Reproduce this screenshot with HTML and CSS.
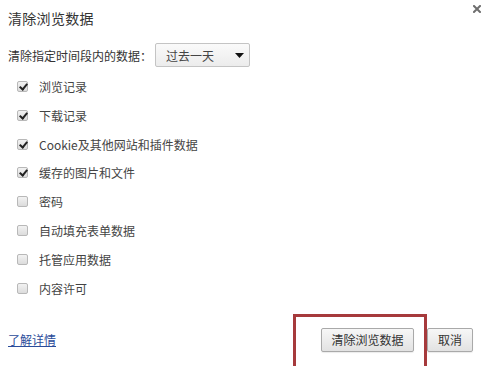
FILE: index.html
```html
<!DOCTYPE html>
<html lang="zh-CN">
<head>
<meta charset="utf-8">
<link rel="stylesheet" href="styles.css">
</head>
<body>
<div class="dialog">
  <div class="header">
    <div class="title">清除浏览数据</div>
    <span class="close" aria-label="关闭">
      <svg width="8" height="8" viewBox="0 0 8 8"><path d="M1 1L7 7M7 1L1 7" stroke="#6f6f6f" stroke-width="2" stroke-linecap="square"/></svg>
    </span>
  </div>
  <div class="period">
    <span class="period-label">清除指定时间段内的数据：</span>
    <div class="select">
      <span>过去一天</span>
      <svg class="arrow" width="9" height="5" viewBox="0 0 9 5"><path d="M0 0H9L4.5 5Z" fill="#111"/></svg>
    </div>
  </div>
  <ul class="options">
    <li><span class="cb checked"></span>浏览记录</li>
    <li><span class="cb checked"></span>下载记录</li>
    <li><span class="cb checked"></span>Cookie及其他网站和插件数据</li>
    <li><span class="cb checked"></span>缓存的图片和文件</li>
    <li><span class="cb"></span>密码</li>
    <li><span class="cb"></span>自动填充表单数据</li>
    <li><span class="cb"></span>托管应用数据</li>
    <li><span class="cb"></span>内容许可</li>
  </ul>
  <div class="footer">
    <a class="learn" href="#">了解详情</a>
    <div class="actions">
      <button class="btn btn-clear">清除浏览数据</button>
      <button class="btn btn-cancel">取消</button>
    </div>
  </div>
  <div class="highlight"></div>
</div>
</body>
</html>
```
FILE: styles.css
```css
html, body {
  margin: 0;
  padding: 0;
  background: #fff;
}
body {
  font-family: "Microsoft YaHei", "Noto Sans CJK SC", "Noto Sans", sans-serif;
  color: #333;
  font-size: 12px;
}
.dialog {
  position: relative;
  width: 486px;
  height: 366px;
  overflow: hidden;
  padding: 0 8px;
  box-sizing: border-box;
}
.header {
  display: flex;
  justify-content: space-between;
  align-items: flex-start;
  height: 36px;
}
.title {
  font-size: 14px;
  line-height: 20px;
  margin-top: 8px;
  letter-spacing: 0.3px;
  color: #333;
}
.close {
  display: flex;
  margin-top: 5px;
  margin-right: -3px;
}
.period {
  display: flex;
  align-items: center;
  height: 24px;
  margin-top: 7px;
}
.period-label {
  width: 147px;
  white-space: nowrap;
}
.select {
  width: 95px;
  height: 24px;
  box-sizing: border-box;
  border: 1px solid #c4c4c4;
  border-radius: 2px;
  background: linear-gradient(#fafafa, #ececec);
  display: flex;
  align-items: center;
  justify-content: space-between;
  padding: 0 5px 0 10px;
  color: #444;
}
.arrow {
  display: block;
}
.options {
  list-style: none;
  margin: 5px 0 0;
  padding: 0;
}
.options li {
  display: flex;
  align-items: center;
  height: 28.85px;
  padding-left: 9px;
  white-space: nowrap;
  color: #444;
}
.cb {
  width: 11px;
  height: 11px;
  box-sizing: border-box;
  border: 1px solid #b8b8b8;
  border-radius: 2px;
  background: linear-gradient(#f2f2f2, #dcdcdc);
  margin-right: 11px;
  position: relative;
  flex-shrink: 0;
}
.cb.checked::after {
  content: "";
  position: absolute;
  left: 3px;
  top: 0px;
  width: 3px;
  height: 6px;
  border: solid #222;
  border-width: 0 2px 2px 0;
  transform: rotate(40deg);
}
.footer {
  display: flex;
  justify-content: space-between;
  align-items: center;
  margin-top: 25px;
  height: 24px;
}
.learn {
  color: #2b4c9a;
  text-decoration: underline;
}
.actions {
  display: flex;
  gap: 13px;
  margin-right: 5px;
}
.btn {
  font-family: inherit;
  font-size: 12px;
  color: #333;
  height: 24px;
  box-sizing: border-box;
  border: 1px solid #a9a9a9;
  border-radius: 2px;
  background: linear-gradient(#f7f7f7, #e2e2e2);
  padding: 0;
  box-shadow: 0 1px 1px rgba(0,0,0,0.08);
}
.btn-clear {
  width: 93px;
}
.btn-cancel {
  width: 46px;
}
.highlight {
  position: absolute;
  left: 293px;
  top: 314px;
  width: 134px;
  height: 70px;
  box-sizing: border-box;
  border: 3px solid #a63a3c;
  pointer-events: none;
}
```
